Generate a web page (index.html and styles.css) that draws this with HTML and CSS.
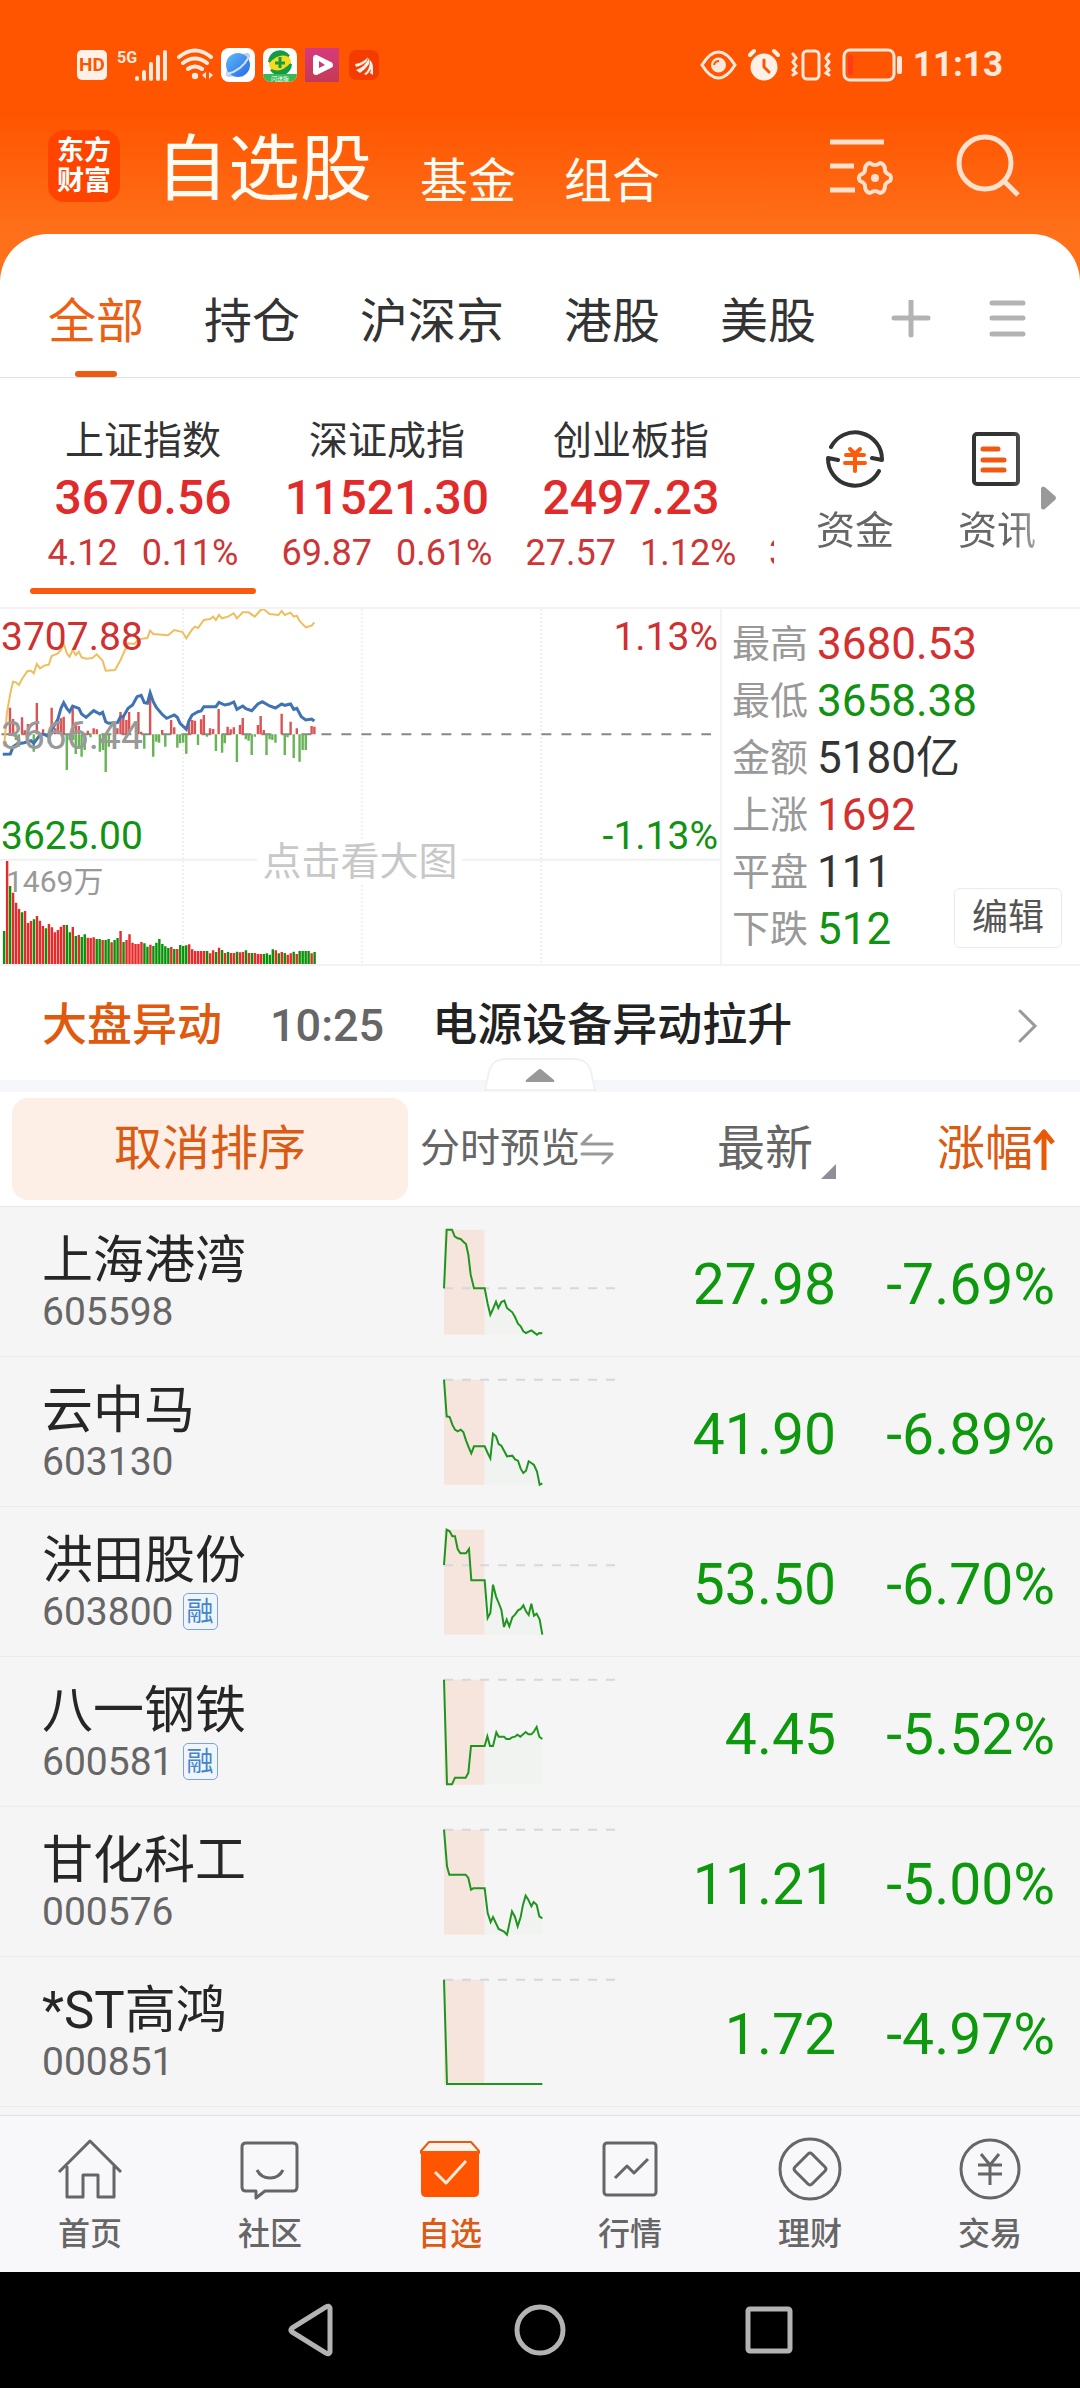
FILE: index.html
```html
<!DOCTYPE html>
<html lang="zh-CN">
<head>
<meta charset="utf-8">
<meta name="viewport" content="width=device-width, initial-scale=1">
<title>自选股</title>
<link rel="stylesheet" href="styles.css">
</head>
<body>
<header class="header">
  <div class="status">
    <div class="status-group">
      <svg width="30" height="34" viewBox="0 0 30 34" aria-hidden="true"><rect y="2" width="30" height="30" rx="5" fill="#fff1e8"/><text x="15" y="23" font-size="19" font-weight="700" text-anchor="middle" fill="#ff5500">HD</text></svg>
      <svg width="54" height="34" viewBox="0 0 54 34" aria-hidden="true" stroke="#ffe9dc" stroke-width="4" stroke-linecap="round"><text x="2" y="15" font-size="16" font-weight="700" fill="#ffe9dc" stroke="none">5G</text><path d="M22 30v1M29 24v7M36 16v15M43 9v22M50 4v27"/></svg>
      <svg width="36" height="34" viewBox="0 0 36 34" aria-hidden="true" fill="none" stroke="#ffe9dc" stroke-width="4" stroke-linecap="round"><path d="M2 9q16-13 32 0M6 15q12-9 24 0M11 21q7-5 14 0"/><circle cx="18" cy="28" r="3.200" fill="#ffe9dc" stroke="none"/><path d="M29 24v7l-4-4zM32 24v7l4-4z" fill="#ffe9dc" stroke="none"/></svg>
      <svg width="34" height="34" viewBox="0 0 34 34" aria-hidden="true"><defs><linearGradient id="globe" x1="0" y1="0" x2="1" y2="1"><stop stop-color="#5cbcf5"/><stop offset="1" stop-color="#2b66e8"/></linearGradient></defs><rect width="34" height="34" rx="8" fill="#fff"/><ellipse cx="17" cy="17" rx="16" ry="6" transform="rotate(-45 17 17)" fill="#bccdf7"/><circle cx="17" cy="17" r="12" fill="url(#globe)"/><path d="M6 26Q20 23 28 9" fill="none" stroke="#cfe2ff" stroke-width="2"/></svg>
      <svg width="34" height="34" viewBox="0 0 34 34" aria-hidden="true"><rect width="34" height="34" rx="8" fill="#fff"/><circle cx="17" cy="15" r="11" fill="#f6dc1c"/><path d="M6 14A11 11 0 0 1 26 8Q16 3 6 14M28 16A11 11 0 0 1 8 22Q18 27 28 16" fill="#159a45" stroke="#159a45" stroke-width="2"/><path d="M17 9v11M12 15h10" stroke="#159a45" stroke-width="3"/><path d="M0 26h34a8 8 0 0 1-8 8H8a8 8 0 0 1-8-8z" fill="#38b956"/><text x="17" y="33" font-size="6" text-anchor="middle" fill="#fff">闪送版</text></svg>
      <svg width="34" height="34" viewBox="0 0 34 34" aria-hidden="true"><defs><linearGradient id="pink" x1="0" y1="0" x2="0" y2="1"><stop stop-color="#d63a7e"/><stop offset="1" stop-color="#c43a56"/></linearGradient></defs><rect width="34" height="34" fill="url(#pink)"/><path d="M11 10v14l14-7z" fill="#fff" stroke="#fff" stroke-width="6" stroke-linejoin="round"/><path d="M14 13v7l6-3z" fill="#cf3a70"/></svg>
      <svg width="34" height="34" viewBox="0 0 34 34" aria-hidden="true"><rect x="2" y="2" width="30" height="30" rx="7" fill="#f43c00"/><path d="M8 16q8-1 13-7-1 3-1 4-4 4-11 6zM9 22q9-3 13-12 1 3 0 6-4 6-9 9zM17 26q6-4 6-14 3 3 3 8v7l-3-2q1-2 1-4-2 4-5 6z" fill="#fff1e8"/></svg>
    </div>
    <div class="status-group status-right">
      <svg width="37" height="34" viewBox="0 0 37 34" aria-hidden="true"><path d="M2 17Q10 4 18.500 4T35 17Q27 30 18.500 30T2 17z" fill="none" stroke="#ffe9dc" stroke-width="3"/><circle cx="18.500" cy="17" r="7.500" fill="#ffe9dc"/><path d="M14 17q1-4 5-4" fill="none" stroke="#ff5500" stroke-width="2"/></svg>
      <svg width="32" height="34" viewBox="0 0 32 34" aria-hidden="true" fill="none" stroke-width="4" stroke-linecap="round"><circle cx="16" cy="19" r="13.500" fill="#fff1e8"/><path d="M2 7l4-4M30 7l-4-4" stroke="#fff1e8"/><path d="M16 12v7l5 5" stroke="#ff5500" stroke-width="3"/></svg>
      <svg width="40" height="34" viewBox="0 0 40 34" aria-hidden="true" fill="none" stroke="#ffe9dc" stroke-width="3" stroke-linecap="round"><rect x="12" y="3" width="16" height="28" rx="4"/><path d="M2 6l3 4-3 4 3 4-3 4 3 3-3 2M38 6l-3 4 3 4-3 4 3 4-3 3 3 2"/></svg>
      <svg width="60" height="34" viewBox="0 0 60 34" aria-hidden="true"><rect x="2" y="2" width="50" height="30" rx="6" fill="none" stroke="#ffe9dc" stroke-width="3"/><rect x="6" y="7" width="5" height="20" rx="2" fill="#ff3b1a"/><rect x="55" y="8" width="5" height="18" rx="2" fill="#ffe9dc"/></svg>
      <time class="clock">11:13</time>
    </div>
  </div>
  <div class="title-row">
    <div class="logo"><span>东方</span><span>财富</span></div>
    <nav class="titles">
      <h1>自选股</h1>
      <a href="#fund">基金</a>
      <a href="#portfolio">组合</a>
    </nav>
    <div class="title-actions">
      <button type="button" aria-label="设置"><svg width="66" height="66" viewBox="0 0 66 66" fill="none" stroke="#ffe0cc" stroke-width="5"><path d="M2 8h54M2 32h24M2 56h25"/><path d="M42 29q5 4 10 0 5 1 5 7 0 3 5 5 2 3 0 6-5 2-5 5 0 6-5 7-5-4-10 0-5-1-5-7 0-3-5-5-2-3 0-6 5-2 5-5 0-6 5-7z" stroke-width="4" stroke-linejoin="round"/><circle cx="47" cy="44" r="4" fill="#ffe0cc" stroke="none"/></svg></button>
      <button type="button" aria-label="搜索"><svg width="66" height="66" viewBox="0 0 66 66" fill="none" stroke="#ffe0cc" stroke-width="5"><circle cx="29" cy="29" r="26"/><path d="M48 47l14 14"/></svg></button>
    </div>
  </div>
</header>

<main class="sheet">
  <div class="tabs">
    <button type="button" class="tab tab-on">全部</button>
    <button type="button" class="tab">持仓</button>
    <button type="button" class="tab">沪深京</button>
    <button type="button" class="tab">港股</button>
    <button type="button" class="tab">美股</button>
    <div class="tab-tools">
      <button type="button" aria-label="添加"><svg width="44" height="44" viewBox="0 0 44 44" stroke="#b3b3b3" stroke-width="5" stroke-linecap="round"><path d="M22 1v34M5 18h34"/></svg></button>
      <button type="button" aria-label="菜单"><svg width="44" height="44" viewBox="0 0 44 44" stroke="#b3b3b3" stroke-width="5" stroke-linecap="round"><path d="M7 3h31M7 18h31M7 34h31"/></svg></button>
    </div>
  </div>

  <section class="indices">
    <div class="index-strip">
      <button type="button" class="index index-on"><span class="index-name">上证指数</span><strong>3670.56</strong><span class="index-diff"><span>4.12</span><span>0.11%</span></span></button>
      <button type="button" class="index"><span class="index-name">深证成指</span><strong>11521.30</strong><span class="index-diff"><span>69.87</span><span>0.61%</span></span></button>
      <button type="button" class="index"><span class="index-name">创业板指</span><strong>2497.23</strong><span class="index-diff"><span>27.57</span><span>1.12%</span></span></button>
      <div class="index-next">3</div>
    </div>
    <div class="shortcuts">
      <div class="shortcut-list">
        <a href="#flow" class="shortcut"><svg width="60" height="60" viewBox="0 0 60 60" fill="none" stroke="#333" stroke-width="4" stroke-linecap="round" stroke-linejoin="round"><path d="M6 18A27 27 0 0 1 57 31L47 29M54 42A27 27 0 0 1 3 29L13 31"/><path d="M25 20l5 5 5-5M21 26h18M20 34h20M30 26v16" stroke="#ff5a0a"/></svg><span>资金</span></a>
        <a href="#news" class="shortcut"><svg width="60" height="60" viewBox="0 0 60 60" fill="none" stroke="#333" stroke-width="4" stroke-linecap="round"><rect x="7" y="5" width="44" height="50" rx="3"/><path d="M16 20h15M16 31h21M16 41h21" stroke="#f05a10" stroke-width="5"/></svg><span>资讯</span></a>
      </div>
      <svg class="more-arrow" width="15" height="24" viewBox="0 0 15 24" aria-hidden="true"><path d="M0 2Q2-1 5 2L14 10q2 2 0 4L5 22q-3 3-5 0z" fill="#999"/></svg>
    </div>
  </section>

  <section class="overview">
    <div class="chart">
      <svg class="chart-plot" viewBox="0 27 2091 1065" preserveAspectRatio="none" role="img" aria-label="上证指数分时图">
        <g fill="none" stroke="#f0f0f0" stroke-width="2">
          <path class="fixed" d="M0 779H2091"/>
          <path class="fixed" stroke-dasharray="2 2" d="M532 27V1092M1051 27V1092M1572 27V1092"/>
        </g>
        <path class="fixed" d="M4 403H2065" stroke="#888" stroke-width="2" stroke-dasharray="10 10"/>
        <g fill="none" stroke-width="7">
          <path id="momentum-up" stroke="#dd5252"/>
          <path id="momentum-down" stroke="#69b357"/>
          <path id="volume-up" stroke="#ea2a2a"/>
          <path id="volume-down" stroke="#089208"/>
        </g>
        <polyline class="fixed" fill="none" stroke="#f0be5c" stroke-width="2" points="12,440 20,340 30,280 38,245 46,247 55,255 64,237 80,213 90,212 98,220 107,192 116,205 130,196 142,194 150,168 168,160 177,150 185,130 194,160 202,170 211,150 220,165 229,155 237,172 250,176 268,174 281,163 298,182 307,212 334,210 350,180 372,130 390,132 402,118 428,114 436,92 445,102 488,106 506,90 530,96 541,115 558,88 566,80 575,84 592,60 610,57 619,50 627,60 636,45 645,55 662,50 679,40 688,55 705,37 722,37 740,50 757,30 766,28 783,42 809,45 818,33 827,45 844,38 853,50 862,47 870,63 888,82 905,77 913,67"/>
        <polyline class="fixed" fill="none" stroke="#3f73b5" stroke-width="3" points="8,463 30,462 38,440 50,432 70,428 90,422 98,430 116,405 125,402 138,408 150,390 168,358 177,325 185,308 194,325 202,335 211,318 229,325 237,342 250,352 272,332 290,342 298,337 307,365 315,370 341,368 350,350 358,350 372,325 385,315 398,290 410,286 419,308 428,310 436,278 445,305 454,322 470,342 484,355 506,345 515,352 523,370 541,388 549,362 558,345 575,335 584,333 592,320 627,320 636,307 653,315 666,312 679,306 688,328 705,318 714,326 731,332 749,312 762,305 783,318 800,324 818,312 827,316 844,312 853,328 862,325 875,350 888,360 905,357 913,363"/>
      </svg>
      <span class="axis axis-left axis-top up">3707.88</span>
      <span class="axis axis-left axis-mid">3666.44</span>
      <span class="axis axis-left axis-low down">3625.00</span>
      <span class="axis axis-right axis-top up">1.13%</span>
      <span class="axis axis-right axis-low down">-1.13%</span>
      <span class="axis-volume">1469万</span>
      <a href="#chart" class="chart-hint">点击看大图</a>
    </div>
    <div class="stats">
      <dl>
        <div><dt>最高</dt><dd class="up">3680.53</dd></div>
        <div><dt>最低</dt><dd class="down">3658.38</dd></div>
        <div><dt>金额</dt><dd>5180亿</dd></div>
        <div><dt>上涨</dt><dd class="up">1692</dd></div>
        <div><dt>平盘</dt><dd>111</dd></div>
        <div><dt>下跌</dt><dd class="down">512</dd></div>
      </dl>
      <button type="button" class="edit">编辑</button>
    </div>
  </section>

  <a href="#alert" class="alert">
    <span class="alert-tag">大盘异动</span>
    <time>10:25</time>
    <span>电源设备异动拉升</span>
    <svg width="20" height="34" viewBox="0 0 20 34" fill="none" stroke="#999" stroke-width="3" stroke-linecap="round" aria-hidden="true"><path d="M2 2l15 15L2 32"/></svg>
  </a>
  <div class="divider">
    <button type="button" class="fold" aria-label="收起"><svg width="112" height="33" viewBox="0 0 112 33"><path d="M1 32L5 14Q8 1 22 1H90q14 0 17 13l4 18z" fill="#fff" stroke="#f0f1f3" stroke-width="2"/><path d="M42 22L54 12q2-2 4 0L70 22q1 2-1 2H43q-2 0-1-2z" fill="#999"/></svg></button>
  </div>

  <table class="stocks">
    <colgroup><col class="col-name"><col class="col-preview"><col><col class="col-change"></colgroup>
    <thead>
      <tr>
        <th><button type="button" class="unsort">取消排序</button></th>
        <th class="preview"><button type="button" class="head">分时预览<svg width="34" height="32" viewBox="0 0 34 32" fill="none" stroke="#999" stroke-width="3" stroke-linecap="round" stroke-linejoin="round" aria-hidden="true"><path d="M32 11H2L11 2M2 21h30l-9 9"/></svg></button></th>
        <th class="num"><button type="button" class="head head-lg">最新<svg class="corner" width="15" height="15" viewBox="0 0 15 15" aria-hidden="true"><path d="M15 0v15H0z" fill="#8f8f99"/></svg></button></th>
        <th class="num change"><button type="button" class="head head-lg head-on">涨幅<svg width="22" height="42" viewBox="0 0 22 42" fill="none" stroke="#e85a08" stroke-width="5" aria-hidden="true"><path d="M11 3v39"/><path d="M2 15l9-11 9 11" stroke-linejoin="round"/></svg></button></th>
      </tr>
    </thead>
    <tbody>
      <tr>
        <td class="stock"><div class="stock-name">上海港湾</div><div class="stock-code">605598</div></td>
        <td class="spark"><svg width="172" height="106" viewBox="0 -2 516 318" data-base="176" data-points="0,176 8,0 24,0 32,20 41,26 50,28 58,36 66,43 73,75 80,135 90,176 122,176 131,222 139,255 147,238 156,216 163,235 172,217 181,213 189,235 205,248 213,262 222,282 230,290 238,305 246,310 262,302 270,308 279,315 286,310 295,311"></svg></td>
        <td class="num price">27.98</td><td class="num change price">-7.69%</td>
      </tr>
      <tr>
        <td class="stock"><div class="stock-name">云中马</div><div class="stock-code">603130</div></td>
        <td class="spark"><svg width="172" height="106" viewBox="0 -2 516 318" data-base="0" data-points="0,0 8,110 17,112 25,135 33,150 41,155 50,150 58,157 66,182 75,205 82,221 90,200 122,200 131,220 139,236 147,162 156,170 164,193 172,198 181,215 189,230 205,228 213,239 222,243 230,267 238,280 246,273 254,245 262,250 270,256 279,276 287,315 295,311"></svg></td>
        <td class="num price">41.90</td><td class="num change price">-6.89%</td>
      </tr>
      <tr>
        <td class="stock"><div class="stock-name">洪田股份</div><div class="stock-code">603800<span class="badge">融</span></div></td>
        <td class="spark"><svg width="172" height="106" viewBox="0 -2 516 318" data-base="107" data-points="0,106 8,0 17,5 25,20 33,20 41,58 49,71 66,71 75,58 82,152 122,152 131,265 139,250 147,165 156,200 164,220 172,240 180,292 188,270 196,290 205,263 213,255 222,242 230,238 238,227 246,245 254,256 262,222 270,258 278,252 287,270 295,315"></svg></td>
        <td class="num price">53.50</td><td class="num change price">-6.70%</td>
      </tr>
      <tr>
        <td class="stock"><div class="stock-name">八一钢铁</div><div class="stock-code">600581<span class="badge">融</span></div></td>
        <td class="spark"><svg width="172" height="106" viewBox="0 -2 516 318" data-base="0" data-points="0,0 9,314 24,314 33,294 65,294 73,280 81,199 122,199 130,170 138,199 147,199 157,158 164,171 180,171 187,178 197,178 204,173 213,171 220,165 229,171 245,157 253,164 262,164 269,157 278,142 286,171 295,178"></svg></td>
        <td class="num price">4.45</td><td class="num change price">-5.52%</td>
      </tr>
      <tr>
        <td class="stock"><div class="stock-name">甘化科工</div><div class="stock-code">000576</div></td>
        <td class="spark"><svg width="172" height="106" viewBox="0 -2 516 318" data-base="0" data-points="0,0 9,110 16,135 65,135 73,145 81,180 88,176 122,176 131,250 140,277 147,262 164,298 180,306 189,315 204,245 213,262 221,290 230,262 237,225 245,198 253,210 262,230 269,217 278,225 286,260 295,266"></svg></td>
        <td class="num price">11.21</td><td class="num change price">-5.00%</td>
      </tr>
      <tr>
        <td class="stock"><div class="stock-name">*ST高鸿</div><div class="stock-code">000851</div></td>
        <td class="spark"><svg width="172" height="106" viewBox="0 -2 516 318" data-base="0" data-points="0,0 9,313 295,313"></svg></td>
        <td class="num price">1.72</td><td class="num change price">-4.97%</td>
      </tr>
    </tbody>
  </table>
</main>

<nav class="dock">
  <a href="#home"><svg viewBox="0 0 66 66"><path d="M2 36L33 5l31 31M10 30v31h16V39h15v22h16V30"/></svg>首页</a>
  <a href="#community"><svg viewBox="0 0 66 66"><path d="M9 7h47q4 0 4 4v40q0 4-4 4H28l-9 7v-7H9q-4 0-4-4V11q0-4 4-4zM20 34q4 8 13 8t13-8"/></svg>社区</a>
  <a href="#watch" class="dock-on"><svg viewBox="0 0 66 66"><path d="M12 6h42l8 9v2H4v-2z" fill="#fff3ec" stroke="#e85a10" stroke-width="2"/><path d="M4 15h58v41q0 5-5 5H9q-5 0-5-5z" fill="#ff5500" stroke="none"/><path d="M18 36l11 11 20-22" stroke="#ffe9d8"/></svg>自选</a>
  <a href="#market"><svg viewBox="0 0 66 66"><rect x="7" y="7" width="52" height="52" rx="3"/><path d="M18 42l12-12 7 7 14-14"/></svg>行情</a>
  <a href="#wealth"><svg viewBox="0 0 66 66"><circle cx="33" cy="33" r="30"/><path d="M31 18q2-2 4 0l13 13q2 2 0 4L35 48q-2 2-4 0L18 35q-2-2 0-4z"/></svg>理财</a>
  <a href="#trade"><svg viewBox="0 0 66 66"><circle cx="33" cy="33" r="29"/><path d="M24 18l9 11 9-11M21 29h24M21 38h24M33 29v20"/></svg>交易</a>
</nav>
<footer class="system">
  <button type="button" aria-label="返回"><svg viewBox="0 0 60 60"><path d="M49 8v44q-1 3-4 1L11 32q-2-2 0-4L45 7q3-2 4 1z"/></svg></button>
  <button type="button" aria-label="主屏"><svg viewBox="0 0 60 60"><circle cx="30" cy="30" r="23"/></svg></button>
  <button type="button" aria-label="最近任务"><svg viewBox="0 0 60 60"><rect x="9" y="9" width="42" height="42" rx="2"/></svg></button>
</footer>
<script src="app.js"></script>
</body>
</html>
```
FILE: styles.css
```css
* { box-sizing: border-box; }

body {
  margin: 0;
  background: #f5f5f5;
  color: #333;
  font-family: Roboto, "Noto Sans CJK SC", sans-serif;
}

button {
  padding: 0;
  border: 0;
  background: none;
  color: inherit;
  font: inherit;
}

a { color: inherit; text-decoration: none; }
svg { display: block; flex: none; }
.up { color: #d53030; }
.down { color: #119311; }

/* Header */
.header {
  padding-bottom: 80px;
  background: linear-gradient(#ff5500 115px, #ff701a 234px);
}
.status {
  display: flex;
  justify-content: space-between;
  align-items: center;
  height: 130px;
  padding: 0 77px;
}
.status-group { display: flex; align-items: center; gap: 8px; }
.status-right { gap: 11px; }
.clock { color: #ffe9dc; font-size: 35px; font-weight: 700; line-height: 40px; }
.title-row {
  display: flex;
  align-items: flex-start;
  height: 104px;
  padding: 0 58px 0 48px;
}
.logo {
  display: flex;
  flex-direction: column;
  justify-content: center;
  align-items: center;
  width: 72px;
  height: 72px;
  border-radius: 16px;
  background: #ff4400;
  color: #fff;
  font-size: 27px;
  font-weight: 700;
  line-height: 30px;
}
.titles {
  display: flex;
  flex: 1;
  align-items: flex-end;
  gap: 48px;
  padding: 4px 0 0 36px;
  color: #fffaf2;
  font-size: 48px;
  line-height: 48px;
}
.titles h1 { margin: 0; font-size: 72px; font-weight: 400; line-height: 72px; }
.title-actions { display: flex; gap: 62px; padding-top: 4px; }

/* Category tabs */
.sheet { margin-top: -80px; border-radius: 48px 48px 0 0; background: #fff; }
.tabs {
  display: flex;
  gap: 60px;
  height: 144px;
  padding: 0 51px 0 48px;
  border-bottom: 1px solid #e2e2e2;
}
.tab { position: relative; padding-top: 32px; font-size: 48px; line-height: 72px; }
.tab-on { color: #ec6014; }
.tab-on::after {
  content: "";
  position: absolute;
  bottom: 0;
  left: 50%;
  width: 42px;
  height: 6px;
  margin-left: -21px;
  border-radius: 3px;
  background: #f05a10;
}
.tab-tools { display: flex; align-items: center; gap: 52px; margin-left: auto; padding-top: 32px; }

/* Index strip */
.indices { display: flex; height: 229px; }
.index-strip {
  display: flex;
  flex: 1;
  gap: 18px;
  min-width: 0;
  padding-left: 30px;
  overflow: hidden;
}
.index {
  position: relative;
  flex: none;
  display: flex;
  flex-direction: column;
  align-items: center;
  width: 226px;
  padding-top: 37px;
}
.index-name { font-size: 39px; line-height: 52px; }
.index strong { color: #e12a2a; font-size: 48px; font-weight: 500; line-height: 62px; }
.index-diff { display: flex; gap: 24px; color: #cc3636; font-size: 36px; line-height: 48px; }
.index-on::after {
  content: "";
  position: absolute;
  right: 0;
  bottom: 13px;
  left: 0;
  height: 6px;
  border-radius: 3px;
  background: #fa5a0f;
}
.index-next { padding: 151px 0 0 7px; color: #cc3636; font-size: 36px; line-height: 48px; }
.shortcuts { position: relative; width: 306px; padding-left: 10px; }
.shortcut-list {
  display: flex;
  width: 284px;
  mask-image: linear-gradient(to right, #000 226px, rgba(0, 0, 0, 0.6) 252px, transparent 274px);
}
.shortcut {
  display: flex;
  flex: 1;
  flex-direction: column;
  align-items: center;
  gap: 22px;
  padding-top: 51px;
  color: #666;
  font-size: 39px;
  line-height: 40px;
}
.more-arrow { position: absolute; top: 108px; right: 24px; }

/* Index overview */
.overview {
  display: grid;
  grid-template-columns: 2fr 1fr;
  border: solid #f3f3f3;
  border-width: 2px 0;
}
.chart { position: relative; }
.chart-plot { width: 100%; height: 355px; }
.fixed { vector-effect: non-scaling-stroke; }
.axis { position: absolute; color: #999; font-size: 39px; line-height: 40px; }
.axis-left { left: 1px; }
.axis-right { right: 2px; }
.axis-top { top: 8px; }
.axis-mid { top: 107px; }
.axis-low { top: 207px; }
.axis.up { color: #d03030; }
.axis.down { color: #119311; }
.axis-volume { position: absolute; top: 257px; left: 6px; color: #999; font-size: 30px; line-height: 32px; }
.chart-hint {
  position: absolute;
  top: 231px;
  left: 50%;
  padding: 0 5px;
  background: #fff;
  color: #c8c8c8;
  font-size: 39px;
  line-height: 44px;
  transform: translateX(-50%);
}
.stats { position: relative; padding: 7px 0 0 10px; border-left: 2px solid #f3f3f3; }
.stats dl { margin: 0; }
.stats dl div { display: flex; gap: 9px; line-height: 57px; }
.stats dt { color: #999; font-size: 38px; }
.stats dd { margin: 0; font-size: 44px; }
.edit {
  position: absolute;
  right: 18px;
  bottom: 16px;
  width: 108px;
  height: 60px;
  border: 1px solid #ebebeb;
  border-radius: 6px;
  background: #fff;
  color: #555;
  font-size: 36px;
  line-height: 56px;
}

/* Market alert */
.alert {
  display: flex;
  align-items: center;
  gap: 48px;
  height: 114px;
  padding: 6px 42px 0;
  color: #222;
  font-size: 45px;
  font-weight: 500;
  line-height: 60px;
}
.alert-tag { color: #e0590d; }
.alert time { color: #666; }
.alert svg { margin-left: auto; }
.divider { position: relative; height: 12px; background: #f5f7fa; }
.fold { position: absolute; bottom: 1px; left: 50%; transform: translateX(-50%); }

/* Stock table */
.stocks { width: 100%; table-layout: fixed; border-collapse: separate; border-spacing: 0; }
.col-name { width: 420px; }
.col-preview { width: 220px; }
.col-change { width: 244px; }
.stocks th {
  height: 115px;
  padding: 0;
  border-bottom: 1px solid #e6e6e6;
  font-weight: 400;
  text-align: left;
}
.stocks td { height: 150px; padding: 0; border-bottom: 1px solid #ebebeb; background: #f5f5f5; }
.stocks .num { text-align: right; }
.stocks .change { padding-right: 25px; }
.unsort {
  display: block;
  width: 396px;
  height: 102px;
  margin-left: 12px;
  border-radius: 16px;
  background: #fdeee6;
  color: #d95b14;
  font-size: 48px;
  line-height: 60px;
}
.head { display: inline-flex; align-items: center; color: #666; font-size: 40px; line-height: 60px; }
.head-lg { font-size: 48px; }
.head-on { color: #d95b14; }
.corner { align-self: flex-end; margin-left: 8px; }
.stocks .stock { padding: 2px 0 0 42px; }
.stock-name { color: #262626; font-size: 51px; line-height: 58px; }
.stock-code { display: flex; align-items: center; gap: 9px; color: #666; font-size: 39px; line-height: 44px; }
.badge {
  width: 35px;
  height: 37px;
  border: 1px solid #78a6da;
  border-radius: 5px;
  background: #eff5fb;
  color: #4384cc;
  font-size: 27px;
  line-height: 37px;
  text-align: center;
}
.stocks .spark { padding-left: 24px; }
.spark svg { overflow: visible; }
.stocks .price { padding-top: 6px; color: #0d980d; font-size: 57px; }

/* Bottom navigation */
.dock {
  display: flex;
  height: 157px;
  margin-top: 8px;
  border-top: 1px solid #e0e0e2;
  background: #f8f8fa;
}
.dock a {
  display: flex;
  flex: 1;
  flex-direction: column;
  align-items: center;
  gap: 12px;
  padding-top: 20px;
  color: #666;
  font-size: 32px;
  font-weight: 500;
  line-height: 40px;
}
.dock svg { width: 66px; height: 66px; fill: none; stroke: #666; stroke-width: 3; stroke-linejoin: round; }
.dock .dock-on { color: #dc5a14; }

/* System keys */
.system {
  display: flex;
  justify-content: center;
  align-items: center;
  gap: 169px;
  height: 116px;
  background: #000;
}
.system svg { width: 60px; height: 60px; fill: none; stroke: #b3b3b3; stroke-width: 5; }
```
FILE: app.js
```js
// Bars are three pixels apart; rising values are positive, falling negative.
const volumes = [-102,312,-237,217,187,168,-158,162,126,132,-137,147,133,117,-110,123,113,98,105,115,120,-120,-98,114,-87,90,-84,-92,82,81,83,-78,-78,75,-75,-78,68,-75,-81,102,-69,75,92,67,63,63,69,-65,-55,61,-57,-67,-78,-63,-56,-51,54,-48,48,-60,-57,-59,62,47,42,42,42,42,-42,35,44,-39,52,-45,36,-39,36,36,-40,38,39,-44,36,-36,36,33,33,-33,-35,-31,-47,44,-35,39,-36,31,35,-40,33,-42,-42,-42,-42,35,-39];
const momentum = [[29,80],[38,46],[64,51],[72,12],[81,31],[107,94],[125,15],[150,80],[160,18],[168,43],[177,48],[185,53],[211,85],[220,38],[229,25],[255,11],[272,18],[281,15],[341,18],[350,67],[358,53],[367,43],[375,67],[402,67],[410,8],[436,113],[471,13],[497,43],[506,21],[549,43],[558,43],[566,41],[584,45],[592,58],[610,18],[619,16],[635,76],[661,23],[670,15],[679,21],[697,28],[705,49],[749,28],[757,55],[766,13],[818,62],[844,38],[862,18],[905,25],[913,23],[46,-17],[55,-37],[98,-52],[142,-27],[194,-107],[202,-17],[212,-17],[220,-59],[229,-37],[237,-67],[246,-47],[263,-9],[290,-52],[299,-47],[307,-113],[316,-37],[419,-43],[445,-67],[454,-22],[462,-25],[480,-37],[515,-40],[523,-27],[532,-25],[541,-58],[575,-32],[601,-7],[627,-50],[645,-55],[653,-27],[688,-83],[714,-15],[722,-19],[731,-62],[740,-7],[774,-62],[783,-15],[791,-17],[800,-25],[827,-62],[835,-9],[853,-71],[870,-82],[879,-47],[888,-47]];

function setPath(id, d) {
  document.getElementById(id).setAttribute("d", d.join(""));
}

const volumeBar = (v, i) => `M${(12 + i * 8.67).toFixed(1)} 1095v${-Math.abs(v)}`;
setPath("volume-up", volumes.map((v, i) => (v > 0 ? volumeBar(v, i) : "")));
setPath("volume-down", volumes.map((v, i) => (v < 0 ? volumeBar(v, i) : "")));
const momentumBar = ([x, v]) => `M${x} 403v${-v}`;
setPath("momentum-up", momentum.filter((m) => m[1] > 0).map(momentumBar));
setPath("momentum-down", momentum.filter((m) => m[1] < 0).map(momentumBar));

// Preview charts: opening auction band, previous close, price line.
document.querySelectorAll(".spark svg").forEach((svg) => {
  const points = svg.dataset.points.split(" ");
  const session = points.filter((p) => parseInt(p, 10) >= 122 || p === points[points.length - 1]);
  svg.innerHTML = `
    <rect width="121" height="315" fill="#f6e5dd"/>
    <polygon points="${session.join(" ")} 295,315 122,315" fill="#20a020" fill-opacity="0.025"/>
    <path d="M0 ${svg.dataset.base}H516" stroke="#d5d8dd" stroke-width="6" stroke-dasharray="27 27"/>
    <polyline points="${svg.dataset.points}" fill="none" stroke="#1f951f" stroke-width="6"/>`;
});
```
